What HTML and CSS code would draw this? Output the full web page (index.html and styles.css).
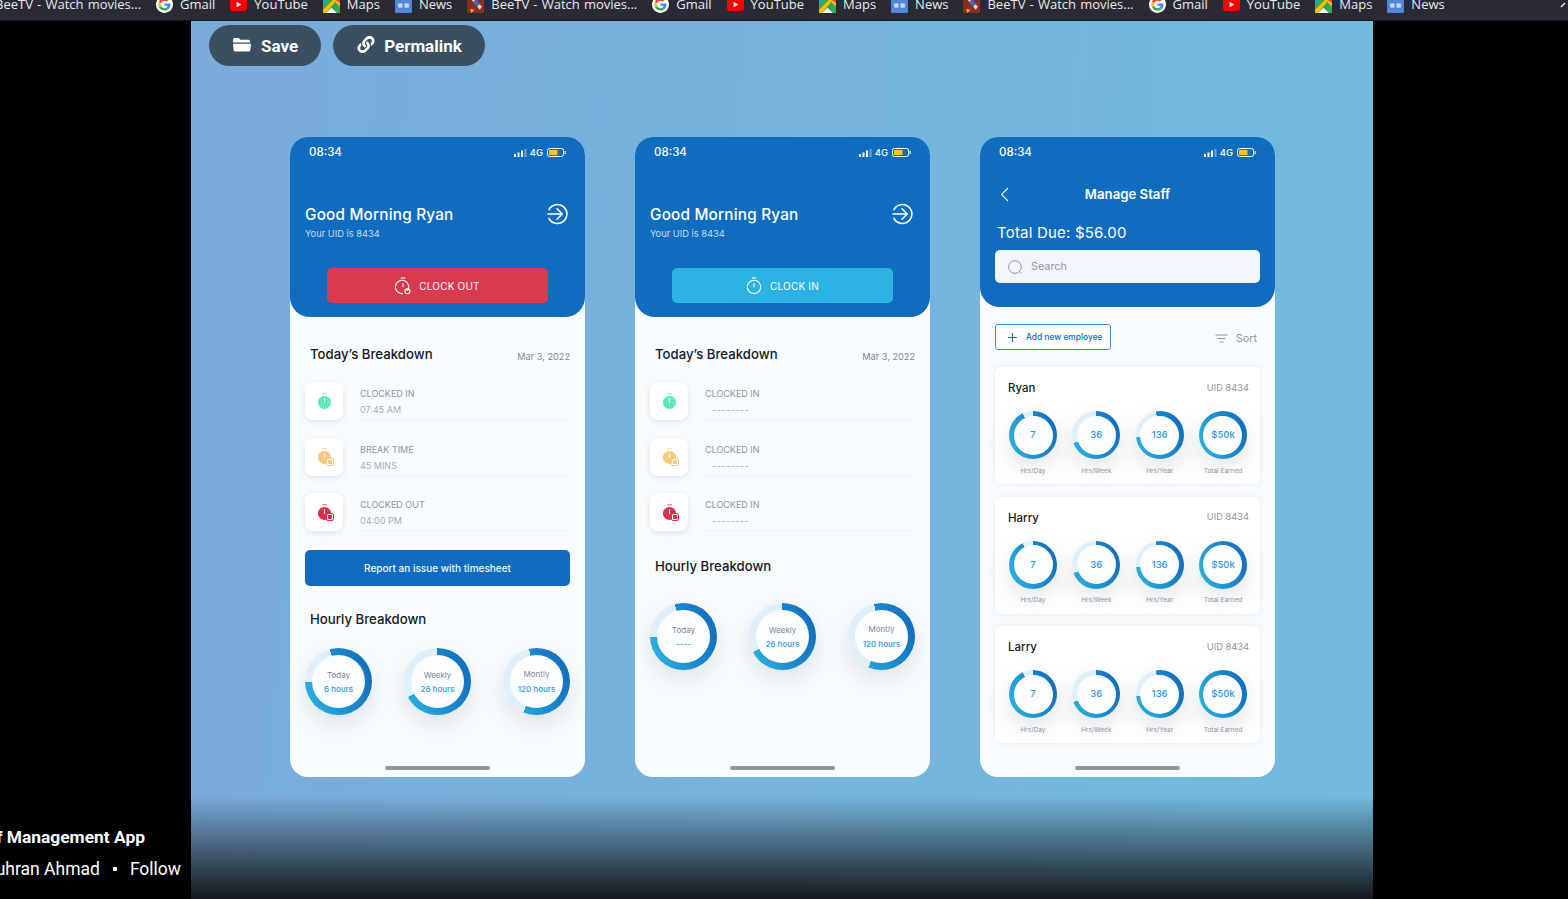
FILE: index.html
```html
<!DOCTYPE html>
<html lang="en">
<head>
  <meta charset="UTF-8"/>
  <meta name="viewport" content="width=device-width, initial-scale=1.0"/>
  <title>Staff Management App</title>
  <link rel="stylesheet" href="styles.css">
</head>
<body>

<svg class="sprites" width="0" height="0">
  <symbol id="fav-google" viewBox="0 0 18 18">
    <circle cx="9" cy="9" r="9" fill="#fff"/>
    <g transform="translate(2.500 2.500) scale(.81)">
      <path d="M15.700 8.200c0-.6 0-1.100-.2-1.600H8v3h4.300c-.2 1-.8 1.800-1.600 2.400l2.600 2c1.500-1.400 2.400-3.400 2.400-5.800z" fill="#4285f4"/>
      <path d="M8 16c2.200 0 4-.7 5.300-2l-2.600-2c-.7.500-1.600.8-2.700.8-2.100 0-3.800-1.400-4.500-3.300L.8 11.600C2.100 14.200 4.800 16 8 16z" fill="#34a853"/>
      <path d="M3.500 9.500a4.800 4.800 0 0 1 0-3L.8 4.400a8 8 0 0 0 0 7.200z" fill="#fbbc05"/>
      <path d="M8 3.200c1.200 0 2.200.4 3 1.200l2.300-2.300A8 8 0 0 0 .8 4.400l2.700 2.100C4.200 4.600 5.900 3.200 8 3.200z" fill="#ea4335"/>
    </g>
  </symbol>
  <symbol id="fav-youtube" viewBox="0 0 18 16">
    <rect y="1" width="18" height="14" rx="3.500" fill="#f00"/>
    <path d="M7 5l5 3-5 3z" fill="#fff"/>
  </symbol>
  <symbol id="fav-maps" viewBox="0 0 16 16">
    <path d="M0 0h16v16H0z" fill="#34a853"/>
    <path d="M0 0h7L0 7z" fill="#4285f4"/>
    <path d="M16 0v8L8 0z" fill="#ea4335"/>
    <path d="M7 0h2l7 7v3L6 0zM0 13L13 0h3L3 16H0z" fill="#fbbc05"/>
    <path d="M3 16l5-5 5 5z" fill="#f1f3f4"/>
  </symbol>
  <symbol id="fav-news" viewBox="0 0 16 16">
    <path d="M2 1h12l1 3H1z" fill="#d9a13b"/>
    <rect y="3" width="16" height="13" rx="1.500" fill="#4f86e0"/>
    <rect x="3" y="7" width="4" height="4" fill="#c9dcf8"/>
    <rect x="9" y="7" width="4" height="4" fill="#c9dcf8"/>
  </symbol>
  <symbol id="fav-beetv" viewBox="0 0 16 16">
    <rect width="16" height="16" fill="#8f2c22"/>
    <path d="M3 2l3-1 8 9-2 3z" fill="#d8dde6"/>
    <path d="M6 5l3-2 3 5-3 2z" fill="#3c6db5"/>
    <path d="M3 12l4 1-3 3z" fill="#e0b040"/>
  </symbol>
  <symbol id="timer" viewBox="0 0 16 18">
    <rect x="5.500" y="0" width="5" height="1.500" fill="currentColor" opacity=".6"/>
    <circle cx="8" cy="10" r="7" fill="currentColor"/>
    <rect x="7.400" y="5.500" width="1.200" height="5" rx=".6" fill="#fff"/>
  </symbol>
  <symbol id="signal" viewBox="0 0 13 8">
    <rect x="0" y="5" width="2" height="3" fill="#fff"/>
    <rect x="3.500" y="3.500" width="2" height="4.500" fill="#fff"/>
    <rect x="7" y="1.500" width="2" height="6.500" fill="#fff"/>
    <rect x="10.500" y="0" width="2" height="8" fill="#fff" opacity=".4"/>
  </symbol>
  <symbol id="battery" viewBox="0 0 19 9">
    <rect x=".5" y=".5" width="16" height="8" rx="2" fill="none" stroke="#fff"/>
    <rect x="2" y="2" width="8.500" height="5" rx=".5" fill="#f4c90f"/>
    <rect x="17.500" y="3" width="1.200" height="3" fill="#fff"/>
  </symbol>
  <symbol id="logout" viewBox="0 0 22 22">
    <path d="M3 6.500A9.500 9.500 0 1 1 3 15.500" fill="none" stroke="#fff" stroke-width="1.600" stroke-linecap="round"/>
    <path d="M2 11h14M11 5.800l5.200 5.200L11 16.200" fill="none" stroke="#fff" stroke-width="1.600" stroke-linecap="round" stroke-linejoin="round"/>
  </symbol>
</svg>

<div class="bookmarks">
  <div class="bookmark-strip">
    <span class="bookmark"><svg><use href="#fav-beetv"/></svg>BeeTV - Watch movies...</span>
    <span class="bookmark"><svg><use href="#fav-google"/></svg>Gmail</span>
    <span class="bookmark"><svg><use href="#fav-youtube"/></svg>YouTube</span>
    <span class="bookmark"><svg><use href="#fav-maps"/></svg>Maps</span>
    <span class="bookmark"><svg><use href="#fav-news"/></svg>News</span>
    <span class="bookmark"><svg><use href="#fav-beetv"/></svg>BeeTV - Watch movies...</span>
    <span class="bookmark"><svg><use href="#fav-google"/></svg>Gmail</span>
    <span class="bookmark"><svg><use href="#fav-youtube"/></svg>YouTube</span>
    <span class="bookmark"><svg><use href="#fav-maps"/></svg>Maps</span>
    <span class="bookmark"><svg><use href="#fav-news"/></svg>News</span>
    <span class="bookmark"><svg><use href="#fav-beetv"/></svg>BeeTV - Watch movies...</span>
    <span class="bookmark"><svg><use href="#fav-google"/></svg>Gmail</span>
    <span class="bookmark"><svg><use href="#fav-youtube"/></svg>YouTube</span>
    <span class="bookmark"><svg><use href="#fav-maps"/></svg>Maps</span>
    <span class="bookmark"><svg><use href="#fav-news"/></svg>News</span>
    <svg class="bookmark-more" viewBox="0 0 8 8"><path d="M1 7l4-4" fill="none" stroke="#e8eaed" stroke-width="1.400"/></svg>
  </div>
</div>

<div class="viewer">
  <aside class="side side-left">
    <div class="shot-title">Staff Management App</div>
    <div class="shot-author">Zuhran Ahmad <i class="dot"></i> Follow</div>
  </aside>

  <main class="stage">
    <div class="actions">
      <button class="pill">
        <svg class="pill-icon" viewBox="0 0 18 15"><path d="M0 2.500A1.500 1.500 0 0 1 1.500 1h4.300l1.700 1.800h8.200A1.500 1.500 0 0 1 17 4.300v1.200H0z" fill="#fff"/><path d="M0 6.800h18l-.7 6.400a1.500 1.500 0 0 1-1.500 1.300H2.200A1.500 1.500 0 0 1 .7 13.200z" fill="#fff"/></svg>
        Save
      </button>
      <button class="pill pill-link">
        <svg class="pill-icon" viewBox="0 0 512 512"><path fill="#fff" d="M326.612 185.391c59.747 59.809 58.927 155.698.36 214.59-.11.12-.24.25-.36.37l-67.2 67.2c-59.27 59.27-155.699 59.262-214.96 0-59.27-59.26-59.27-155.7 0-214.96l37.106-37.106c9.84-9.84 26.786-3.3 27.294 10.606.648 17.722 3.826 35.527 9.69 52.721 1.986 5.822.567 12.262-3.783 16.612l-13.087 13.087c-28.026 28.026-28.905 73.66-1.155 101.96 28.024 28.579 74.086 28.749 102.325.51l67.2-67.19c28.191-28.191 28.073-73.757 0-101.83-3.701-3.694-7.429-6.564-10.341-8.569a16.037 16.037 0 0 1-6.947-12.606c-.396-10.567 3.348-21.456 11.698-29.806l21.054-21.055c5.521-5.521 14.182-6.199 20.584-1.731a152.482 152.482 0 0 1 20.522 17.197zM467.547 44.449c-59.261-59.262-155.69-59.27-214.96 0l-67.2 67.2c-.12.12-.25.25-.36.37-58.566 58.892-59.387 154.781.36 214.59a152.454 152.454 0 0 0 20.521 17.196c6.402 4.468 15.064 3.789 20.584-1.731l21.054-21.055c8.35-8.35 12.094-19.239 11.698-29.806a16.037 16.037 0 0 0-6.947-12.606c-2.912-2.005-6.64-4.875-10.341-8.569-28.073-28.073-28.191-73.639 0-101.83l67.2-67.19c28.239-28.239 74.3-28.069 102.325.51 27.75 28.3 26.872 73.934-1.155 101.96l-13.087 13.087c-4.35 4.35-5.769 10.79-3.783 16.612 5.864 17.194 9.042 34.999 9.69 52.721.509 13.906 17.454 20.446 27.294 10.606l37.106-37.106c59.271-59.259 59.271-155.699.001-214.959z"/></svg>
        Permalink
      </button>
    </div>

    <div class="phones">

      <!-- clocked in -->
      <section class="phone">
        <header class="phone-head">
          <div class="status">
            <span class="time">08:34</span>
            <span class="status-icons"><svg class="ic-signal"><use href="#signal"/></svg>4G<svg class="ic-battery"><use href="#battery"/></svg></span>
          </div>
          <div class="greeting">
            <div>
              <h1>Good Morning Ryan</h1>
              <p>Your UID is 8434</p>
            </div>
            <svg class="ic-logout"><use href="#logout"/></svg>
          </div>
          <button class="clock-btn clock-out">
            <svg class="ic-clock" viewBox="0 0 18 20" fill="none" stroke="#fff" stroke-width="1.200"><path d="M6.500 1h5"/><path d="M14 15.500A7.500 7.500 0 1 0 9 18.500"/><path d="M9 7v4.500"/><circle cx="14" cy="16" r="2.800"/></svg>
            CLOCK OUT
          </button>
        </header>
        <div class="phone-body">
          <div class="section-head">
            <h2>Today’s Breakdown</h2>
            <span class="date">Mar 3, 2022</span>
          </div>
          <div class="log">
            <div class="log-row">
              <div class="tile green"><svg><use href="#timer"/></svg></div>
              <div class="log-text"><span>CLOCKED IN</span><span class="log-value">07:45 AM</span></div>
            </div>
            <div class="log-row">
              <div class="tile orange"><svg><use href="#timer"/></svg><i class="badge"></i></div>
              <div class="log-text"><span>BREAK TIME</span><span class="log-value">45 MINS</span></div>
            </div>
            <div class="log-row">
              <div class="tile red"><svg><use href="#timer"/></svg><i class="badge"></i></div>
              <div class="log-text"><span>CLOCKED OUT</span><span class="log-value">04:00 PM</span></div>
            </div>
          </div>
          <button class="report-btn">Report an issue with timesheet</button>
          <h2 class="hourly-title">Hourly Breakdown</h2>
          <div class="hourly">
            <div class="ring ring-big" style="--from:-15deg;--end:285deg"><div class="ring-face"><span class="ring-label">Today</span><span class="ring-value">6 hours</span></div></div>
            <div class="ring ring-big" style="--from:0deg;--end:242deg"><div class="ring-face"><span class="ring-label">Weekly</span><span class="ring-value">26 hours</span></div></div>
            <div class="ring ring-big" style="--from:-13deg;--end:216deg"><div class="ring-face"><span class="ring-label">Montly</span><span class="ring-value">120 hours</span></div></div>
          </div>
          <div class="home-bar"></div>
        </div>
      </section>

      <!-- not clocked in yet -->
      <section class="phone">
        <header class="phone-head">
          <div class="status">
            <span class="time">08:34</span>
            <span class="status-icons"><svg class="ic-signal"><use href="#signal"/></svg>4G<svg class="ic-battery"><use href="#battery"/></svg></span>
          </div>
          <div class="greeting">
            <div>
              <h1>Good Morning Ryan</h1>
              <p>Your UID is 8434</p>
            </div>
            <svg class="ic-logout"><use href="#logout"/></svg>
          </div>
          <button class="clock-btn clock-in">
            <svg class="ic-clock" viewBox="0 0 18 20" fill="none" stroke="#fff" stroke-width="1.200"><path d="M6.500 1h5"/><circle cx="9" cy="11" r="7.500"/><path d="M9 7v4.500"/></svg>
            CLOCK IN
          </button>
        </header>
        <div class="phone-body">
          <div class="section-head">
            <h2>Today’s Breakdown</h2>
            <span class="date">Mar 3, 2022</span>
          </div>
          <div class="log">
            <div class="log-row">
              <div class="tile green"><svg><use href="#timer"/></svg></div>
              <div class="log-text"><span>CLOCKED IN</span><span class="log-value log-empty">--------</span></div>
            </div>
            <div class="log-row">
              <div class="tile orange"><svg><use href="#timer"/></svg><i class="badge"></i></div>
              <div class="log-text"><span>CLOCKED IN</span><span class="log-value log-empty">--------</span></div>
            </div>
            <div class="log-row">
              <div class="tile red"><svg><use href="#timer"/></svg><i class="badge"></i></div>
              <div class="log-text"><span>CLOCKED IN</span><span class="log-value log-empty">--------</span></div>
            </div>
          </div>
          <h2 class="hourly-title hourly-title-tight">Hourly Breakdown</h2>
          <div class="hourly hourly-tight">
            <div class="ring ring-big" style="--from:-15deg;--end:285deg"><div class="ring-face"><span class="ring-label">Today</span><span class="ring-value">----</span></div></div>
            <div class="ring ring-big" style="--from:0deg;--end:242deg"><div class="ring-face"><span class="ring-label">Weekly</span><span class="ring-value">26 hours</span></div></div>
            <div class="ring ring-big" style="--from:-13deg;--end:216deg"><div class="ring-face"><span class="ring-label">Montly</span><span class="ring-value">120 hours</span></div></div>
          </div>
          <div class="home-bar"></div>
        </div>
      </section>

      <!-- manage staff -->
      <section class="phone">
        <header class="phone-head phone-head-staff">
          <div class="status">
            <span class="time">08:34</span>
            <span class="status-icons"><svg class="ic-signal"><use href="#signal"/></svg>4G<svg class="ic-battery"><use href="#battery"/></svg></span>
          </div>
          <div class="title-bar">
            <svg class="ic-back" viewBox="0 0 9 15"><path d="M8 1L1.500 7.500 8 14" fill="none" stroke="#fff" stroke-width="1.100"/></svg>
            <h1>Manage Staff</h1>
          </div>
          <div class="total-due">Total Due: $56.00</div>
          <div class="search">
            <svg class="ic-search" viewBox="0 0 15 15" fill="none" stroke="#8b95a5"><circle cx="7" cy="7" r="6.300"/><path d="M11.800 11.800l1.700 1.700"/></svg>
            Search
          </div>
        </header>
        <div class="phone-body phone-body-staff">
          <div class="staff-tools">
            <button class="add-btn">
              <svg class="ic-plus" viewBox="0 0 9 9"><path d="M4.500 0v9M0 4.500h9" stroke="#1069bd" stroke-width="1.100"/></svg>
              Add new employee
            </button>
            <span class="sort">
              <svg class="ic-sort" viewBox="0 0 12 9"><path d="M0 1h12M2 4.500h8M4 8h4" stroke="#8b95a5"/></svg>
              Sort
            </span>
          </div>
          <div class="staff-list">
            <article class="staff-card">
              <div class="staff-head"><span class="staff-name">Ryan</span><span class="staff-uid">UID 8434</span></div>
              <div class="staff-stats">
                <div class="stat"><div class="ring ring-small" style="--from:0deg;--end:335deg"><div class="ring-face">7</div></div><span>Hrs/Day</span></div>
                <div class="stat"><div class="ring ring-small" style="--from:0deg;--end:250deg"><div class="ring-face">36</div></div><span>Hrs/Week</span></div>
                <div class="stat"><div class="ring ring-small" style="--from:-10deg;--end:275deg"><div class="ring-face">136</div></div><span>Hrs/Year</span></div>
                <div class="stat"><div class="ring ring-small" style="--from:0deg;--end:360deg"><div class="ring-face">$50k</div></div><span>Total Earned</span></div>
              </div>
            </article>
            <article class="staff-card">
              <div class="staff-head"><span class="staff-name">Harry</span><span class="staff-uid">UID 8434</span></div>
              <div class="staff-stats">
                <div class="stat"><div class="ring ring-small" style="--from:0deg;--end:335deg"><div class="ring-face">7</div></div><span>Hrs/Day</span></div>
                <div class="stat"><div class="ring ring-small" style="--from:0deg;--end:250deg"><div class="ring-face">36</div></div><span>Hrs/Week</span></div>
                <div class="stat"><div class="ring ring-small" style="--from:-10deg;--end:275deg"><div class="ring-face">136</div></div><span>Hrs/Year</span></div>
                <div class="stat"><div class="ring ring-small" style="--from:0deg;--end:360deg"><div class="ring-face">$50k</div></div><span>Total Earned</span></div>
              </div>
            </article>
            <article class="staff-card">
              <div class="staff-head"><span class="staff-name">Larry</span><span class="staff-uid">UID 8434</span></div>
              <div class="staff-stats">
                <div class="stat"><div class="ring ring-small" style="--from:0deg;--end:335deg"><div class="ring-face">7</div></div><span>Hrs/Day</span></div>
                <div class="stat"><div class="ring ring-small" style="--from:0deg;--end:250deg"><div class="ring-face">36</div></div><span>Hrs/Week</span></div>
                <div class="stat"><div class="ring ring-small" style="--from:-10deg;--end:275deg"><div class="ring-face">136</div></div><span>Hrs/Year</span></div>
                <div class="stat"><div class="ring ring-small" style="--from:0deg;--end:360deg"><div class="ring-face">$50k</div></div><span>Total Earned</span></div>
              </div>
            </article>
          </div>
          <div class="home-bar"></div>
        </div>
      </section>

    </div>
  </main>

  <aside class="side"></aside>
</div>

</body>
</html>
```

FILE: styles.css
```css
* {
  box-sizing: border-box;
}

html, body {
  height: 100%;
}

body {
  margin: 0;
  background: #000;
  font-family: Inter, 'Noto Sans', sans-serif;
  overflow: hidden;
}

h1, h2, p {
  margin: 0;
}

button {
  font-family: inherit;
  border: none;
  cursor: pointer;
}

.sprites {
  display: block;
}

/* browser bookmarks bar */
.bookmarks {
  height: 21px;
  background: #292a33;
  border-bottom: 1px solid #15161a;
  overflow: hidden;
}

.bookmark-strip {
  display: flex;
  gap: 15px;
  margin: -10px 0 0 -29px;
  height: 28px;
  align-items: center;
}

.bookmark {
  display: flex;
  align-items: center;
  gap: 7px;
  flex: none;
  color: #e8eaed;
  font: 13px 'Open Sans', sans-serif;
  word-spacing: 0.8px;
  white-space: nowrap;
}

.bookmark svg {
  width: 17px;
  height: 17px;
  flex: none;
  margin-top: 1px;
}

.bookmark-more {
  width: 8px;
  height: 8px;
  margin: 0 0 0 auto;
  flex: none;
}

/* viewer */
.viewer {
  display: flex;
  height: 878px;
}

.side {
  flex: 1;
  min-width: 0;
  color: #fff;
}

.side-left {
  flex: none;
  width: 191px;
  display: flex;
  flex-direction: column;
  align-items: flex-end;
  overflow: hidden;
  padding: 805px 10px 0 0;
  white-space: nowrap;
}

.shot-title {
  font: bold 17.400px/22px Roboto, sans-serif;
  margin-right: 36px;
}

.shot-author {
  font: 17.500px/22px Roboto, sans-serif;
  margin-top: 10px;
  display: flex;
  align-items: center;
  gap: 13px;
}

.dot {
  width: 4px;
  height: 4px;
  background: #fff;
}

.stage {
  width: 1182px;
  flex: none;
  padding: 4px 0 0 18px;
  background:
    linear-gradient(to bottom, transparent 88.2%, rgba(17, 21, 26, 0.98) 100%),
    linear-gradient(95deg, #7aabdb 0%, #72bbdf 100%);
}

.actions {
  display: flex;
  gap: 12px;
}

.pill {
  height: 41px;
  padding: 0 23px 0 24px;
  border-radius: 21px;
  background: #3b4f62;
  color: #fff;
  font: bold 17px Roboto, sans-serif;
  display: flex;
  align-items: center;
  gap: 10px;
}

.pill-link {
  gap: 9px;
  padding: 0 23px 0 24px;
}

.pill-icon {
  width: 18px;
  height: 17px;
  margin-top: -2px;
}

.phones {
  display: flex;
  gap: 50px;
  margin: 71px 0 0 81px;
}

.phone {
  width: 295px;
  height: 640px;
  border-radius: 18px;
  background: #f9fcff;
  display: flex;
  flex-direction: column;
  overflow: hidden;
}

.phone-head {
  height: 180px;
  flex: none;
  background: #106cbf;
  border-radius: 0 0 20px 20px;
  padding: 8px 15px 0;
  color: #fff;
}

.phone-head-staff {
  height: 170px;
}

.status {
  display: flex;
  justify-content: space-between;
  align-items: center;
  height: 14px;
  padding: 0 4px 0 4px;
}

.time {
  font-size: 11.500px;
  font-weight: 500;
}

.status-icons {
  display: flex;
  align-items: center;
  font-size: 9.500px;
  font-weight: 500;
  gap: 3px;
  padding-top: 1px;
}

.ic-signal {
  width: 13px;
  height: 8px;
}

.ic-battery {
  width: 19px;
  height: 9px;
  margin-left: 1px;
}

.greeting {
  display: flex;
  justify-content: space-between;
  margin-top: 46px;
  padding-right: 2px;
}

.greeting h1 {
  font-size: 15.300px;
  font-weight: 500;
  line-height: 20px;
  letter-spacing: 0.2px;
}

.greeting p {
  font-size: 9.300px;
  line-height: 12px;
  margin-top: 3px;
  color: #c9def2;
}

.ic-logout {
  width: 22px;
  height: 22px;
  margin-top: -2px;
}

.clock-btn {
  display: flex;
  align-items: center;
  justify-content: center;
  gap: 8px;
  width: 221px;
  height: 35px;
  margin: 28px auto 0;
  border-radius: 5px;
  color: #fff;
  font-size: 10px;
  font-weight: 400;
  letter-spacing: 0.2px;
}

.clock-out {
  background: #d93a50;
}

.clock-in {
  background: #2bb3e3;
}

.ic-clock {
  width: 16px;
  height: 18px;
}

.phone-body {
  flex: 1;
  display: flex;
  flex-direction: column;
  padding: 27px 15px 7px;
}

.phone-body-staff {
  padding-top: 17px;
}

.section-head {
  display: flex;
  justify-content: space-between;
  align-items: flex-end;
  padding-left: 5px;
  height: 20px;
}

h2 {
  font-size: 13.200px;
  font-weight: 500;
  line-height: 20px;
  color: #15181c;
}

.date {
  font-size: 9.200px;
  color: #7c8797;
  line-height: 15px;
}

.log {
  display: flex;
  flex-direction: column;
  gap: 17.500px;
  margin-top: 18px;
}

.log-row {
  display: flex;
  gap: 13px;
  height: 38px;
}

.tile {
  width: 38px;
  height: 38px;
  flex: none;
  border-radius: 8px;
  background: #fff;
  box-shadow: 0 2px 6px rgba(60, 80, 110, 0.14);
  display: flex;
  align-items: center;
  justify-content: center;
  position: relative;
}

.tile svg {
  width: 15px;
  height: 17px;
}

.green {
  color: #5ceab5;
}

.orange {
  color: #f9c97f;
}

.red {
  color: #d9304c;
}

.badge {
  position: absolute;
  left: 22px;
  top: 21px;
  width: 6px;
  height: 6px;
  border-radius: 1px;
  background: currentColor;
  border: 1.500px solid #fff;
  outline: 1px solid currentColor;
  outline-offset: -0.5px;
}

.log-text {
  flex: 1;
  display: flex;
  flex-direction: column;
  padding: 6px 0 0 4px;
  border-bottom: 1px solid #f1f4f7;
  color: #8b95a5;
  font-size: 9px;
  line-height: 12px;
  gap: 4px;
}

.log-value {
  color: #a5adb9;
}

.log-empty {
  padding-left: 7px;
  letter-spacing: 0.5px;
}

.report-btn {
  height: 36px;
  margin-top: 19px;
  flex: none;
  border-radius: 5px;
  background: #106cbf;
  color: #f3f8fd;
  font-size: 10px;
  font-weight: 500;
}

.hourly-title {
  margin-top: 23px;
  padding-left: 5px;
}

.hourly-title-tight {
  margin-top: 25px;
}

.hourly {
  display: flex;
  justify-content: space-between;
  margin-top: 19px;
}

.hourly-tight {
  margin-top: 27px;
}

/* progress rings: light track on top of the blue gradient */
.ring {
  border-radius: 50%;
  flex: none;
  background:
    conic-gradient(from var(--from), transparent var(--end), #dff0fa 0),
    linear-gradient(250deg, #0e66b9, #2db5e3);
  box-shadow: 0 9px 22px rgba(50, 70, 100, 0.14);
}

.ring-big {
  width: 67px;
  height: 67px;
  padding: 7px;
}

.ring-small {
  width: 48px;
  height: 48px;
  padding: 4.500px;
}

.ring-face {
  width: 100%;
  height: 100%;
  border-radius: 50%;
  background: #fbfdff;
  display: flex;
  flex-direction: column;
  align-items: center;
  justify-content: center;
  gap: 4px;
}

.ring-big .ring-face {
  padding-top: 1px;
}

.ring-label {
  font-size: 8px;
  line-height: 10px;
  color: #7c8797;
}

.ring-big:last-child .ring-label {
  margin-top: -2px;
  margin-bottom: 1px;
}

.ring-value {
  font-size: 8px;
  line-height: 10px;
  font-weight: 500;
  color: #2f9bd9;
}

.home-bar {
  width: 105px;
  height: 4px;
  flex: none;
  margin: auto auto 0;
  border-radius: 2px;
  background: #969696;
}

/* manage staff */
.title-bar {
  display: flex;
  align-items: center;
  justify-content: center;
  height: 20px;
  margin-top: 25px;
  position: relative;
}

.title-bar h1 {
  font-size: 13.200px;
  font-weight: 600;
}

.ic-back {
  position: absolute;
  left: 5px;
  top: 3px;
  width: 9px;
  height: 15px;
}

.total-due {
  font-size: 15px;
  line-height: 20px;
  margin-top: 19px;
  padding-left: 2px;
  letter-spacing: 0.2px;
}

.search {
  display: flex;
  align-items: center;
  gap: 8px;
  height: 33px;
  margin-top: 7px;
  padding-left: 13px;
  border-radius: 5px;
  background: #f2f7fe;
  color: #8b95a5;
  font-size: 10.800px;
}

.ic-search {
  width: 15px;
  height: 15px;
  margin-top: 2px;
}

.staff-tools {
  display: flex;
  justify-content: space-between;
  align-items: center;
  height: 26px;
  flex: none;
}

.add-btn {
  display: flex;
  align-items: center;
  gap: 9px;
  width: 116px;
  height: 26px;
  padding-left: 12px;
  border: 1px solid #3f8ad0;
  border-radius: 3px;
  background: #fff;
  color: #1069bd;
  font-size: 8.400px;
  font-weight: 500;
  white-space: nowrap;
}

.ic-plus {
  width: 9px;
  height: 9px;
  flex: none;
}

.sort {
  display: flex;
  align-items: center;
  gap: 8px;
  padding: 2px 3px 0 0;
  color: #8b95a5;
  font-size: 10.800px;
}

.ic-sort {
  width: 13px;
  height: 9px;
}

.staff-list {
  display: flex;
  flex-direction: column;
  gap: 12.500px;
  margin-top: 17px;
}

.staff-card {
  height: 117px;
  padding: 13px 11px 0 13px;
  border-radius: 6px;
  background: #fff;
  box-shadow: 0 0 6px rgba(60, 90, 130, 0.1);
}

.staff-head {
  display: flex;
  justify-content: space-between;
  align-items: center;
  height: 16px;
}

.staff-name {
  font-size: 11.500px;
  font-weight: 500;
  color: #15181c;
}

.staff-uid {
  font-size: 9.300px;
  color: #8b95a5;
  margin-top: -2px;
}

.staff-stats {
  display: flex;
  justify-content: space-between;
  margin-top: 15px;
  padding: 0 2px 0 1px;
}

.stat {
  display: flex;
  flex-direction: column;
  align-items: center;
  width: 48px;
  gap: 6.500px;
  font-size: 6.500px;
  line-height: 10px;
  color: #8b95a5;
  white-space: nowrap;
}

.ring-small .ring-face {
  font-size: 9.500px;
  font-weight: 500;
  color: #2f9bd9;
}
```
